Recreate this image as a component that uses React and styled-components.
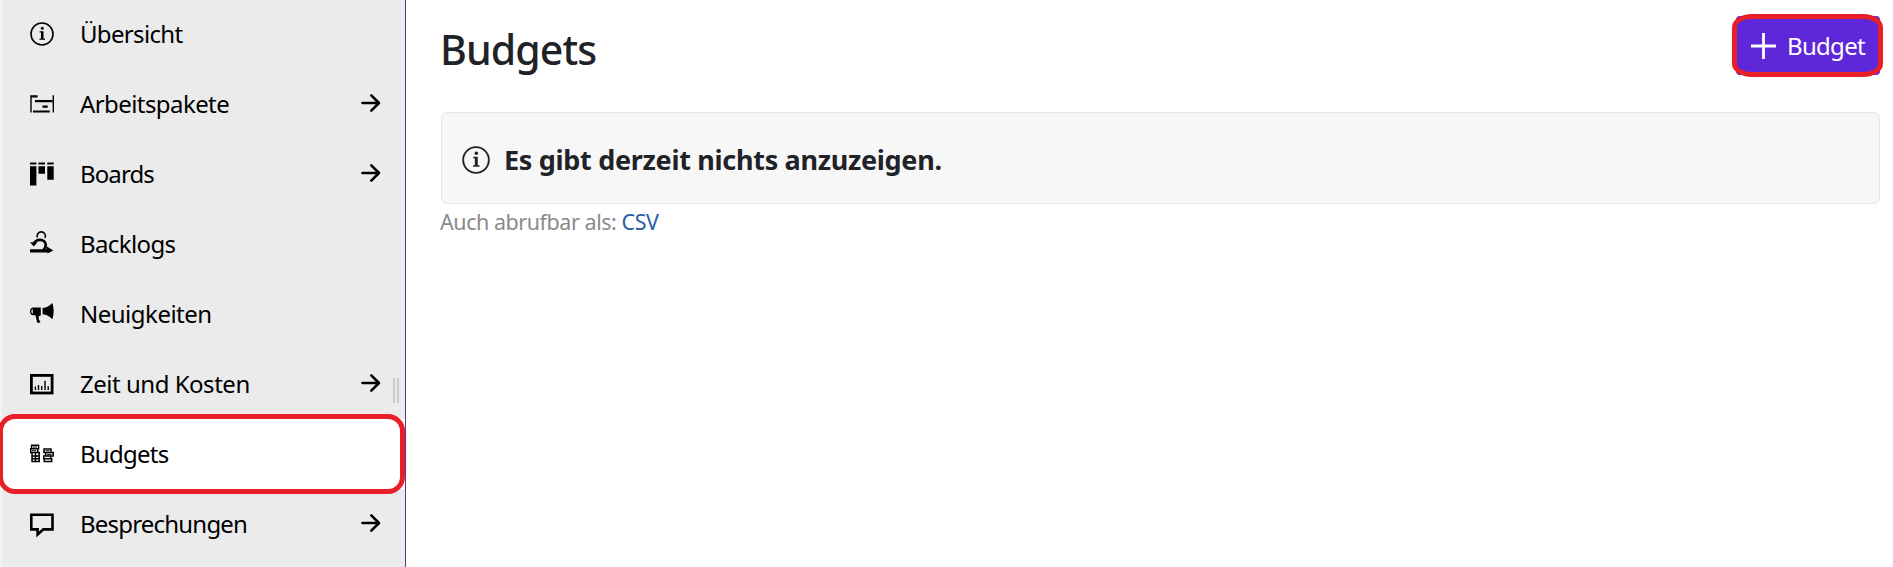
import React from 'react';
import styled, { createGlobalStyle } from 'styled-components';

const GlobalStyle = createGlobalStyle`
  * { box-sizing: border-box; }
  html, body { margin: 0; height: 100%; background: #fff; overflow: hidden; }
  body { font-family: "Noto Sans", "Open Sans", sans-serif; color: #1f2328; }
  #root { height: 100%; }
`;

const Page = styled.div`
  display: flex;
  width: 100%;
  height: 567px;
  overflow: hidden;
`;

const Sidebar = styled.nav`
  position: relative;
  flex: 0 0 406px;
  height: 567px;
  background: linear-gradient(90deg, #f3f3f3 2px, #ebebeb 2px);
  border-right: 1px solid #563d8a;
  overflow: hidden;
`;

const MenuList = styled.ul`
  list-style: none;
  margin: -1px 0 0;
  padding: 0;
`;

const MenuItem = styled.li`
  display: flex;
  align-items: center;
  height: 70px;
  padding: 0 24px 0 29.5px;
  background: ${(p) => (p.$active ? '#fff' : 'transparent')};
  color: #000;
`;

const MenuIcon = styled.svg`
  flex: none;
  width: 24px;
  height: 24px;
  margin-right: 26.5px;
  overflow: visible;
`;

const MenuLabel = styled.span`
  flex: 1;
  font-size: 24px;
  line-height: 34px;
  white-space: nowrap;
  letter-spacing: ${(p) => p.$track}px;
`;

const Arrow = styled.svg`
  flex: none;
  width: 20px;
  height: 20px;
  margin-top: -3px;
`;

const ResizeGrip = styled.div`
  position: absolute;
  top: 378px;
  right: 6px;
  width: 6px;
  height: 25px;
  border: solid #cbcbcb;
  border-width: 0 2px;
`;

const ActiveMarker = styled.div`
  position: absolute;
  top: 414px;
  left: -2px;
  width: 407px;
  height: 80px;
  border: 5px solid #e81f27;
  border-radius: 17px;
`;

const Content = styled.main`
  flex: 1;
  min-width: 0;
  padding: 16px 13px 0 35px;
`;

const Toolbar = styled.header`
  display: flex;
  justify-content: space-between;
  align-items: flex-start;
  height: 96px;
`;

const Title = styled.h1`
  margin: 4px 0 0 -1px;
  font-size: 41px;
  font-weight: 500;
  line-height: 58px;
  letter-spacing: ${(p) => p.$track}px;
`;

const CreateButton = styled.button`
  position: relative;
  display: flex;
  align-items: center;
  width: 144px;
  height: 59px;
  padding: 0 0 0 15px;
  border: 0;
  border-radius: 4px;
  background: #5f27da;
  color: #fff;
  font: 400 24px/34px "Noto Sans", sans-serif;
  letter-spacing: ${(p) => p.$track}px;

  svg {
    flex: none;
    width: 25px;
    height: 26px;
    margin-right: 11px;
  }
`;

const ButtonMarker = styled.span`
  position: absolute;
  top: -2px;
  left: -4px;
  width: 151px;
  height: 63px;
  border: 5px solid #e81f27;
  border-radius: 20px / 13px;
`;

const Notice = styled.section`
  display: flex;
  align-items: center;
  height: 92px;
  padding: 3px 0 0 20px;
  border: 1px solid #e6e6e6;
  border-radius: 6px;
  background: #f7f7f7;

  svg {
    flex: none;
    width: 28px;
    height: 28px;
    margin-right: 14px;
  }
`;

const NoticeText = styled.strong`
  font-size: 27px;
  font-weight: 700;
  line-height: 38px;
  white-space: nowrap;
  letter-spacing: ${(p) => p.$track}px;
`;

const Export = styled.p`
  margin: 2px 0 0 -1px;
  font-size: 21.5px;
  line-height: 32px;
  color: #8a8a8a;
  letter-spacing: ${(p) => p.$track}px;

  a { color: #2a5ba8; text-decoration: none; }
`;

const InfoShape = () => (
  <>
    <circle cx="12" cy="12" r="11" fill="none" stroke="currentColor" strokeWidth="1.6" />
    <circle cx="12.3" cy="6.3" r="1.5" fill="currentColor" />
    <path d="M9.6 9.2h3.9v7.2h1.5v1.4H9.5v-1.4H11v-5.8H9.6z" fill="currentColor" />
  </>
);

const shapes = {
  info: <InfoShape />,
  packages: (
    <path
      d="M.3 3.2h1.4v17.4H.3zM22.6 3.2h1.4v17.4h-1.4zM1.4 3.2h6.2v2.2H1.4zM5 8h17.4v2.2H5zM12.5 13.4h5.2v2.4h-5.2zM3 18.4h16.8v2.2H3z"
      fill="currentColor"
    />
  ),
  boards: (
    <path
      d="M0 .5h6.4v1.9H0zM8.5.5H15v1.9H8.5zM17.3.5h6.4v1.9h-6.4zM0 4.3h6.4v19.2H0zM8.5 4.3H15v7.4H8.5zM17.3 4.3h6.4v13.4h-6.4z"
      fill="currentColor"
    />
  ),
  backlogs: (
    <>
      <path d="M7.3 5.4A4.2 4.2 0 1 1 15 6" fill="none" stroke="currentColor" strokeWidth="1.6" />
      <path d="M3.7 12.5C4.6 6.5 15.5 6 15.8 13c.1 2.5-1.1 3.7-2.5 5.2" fill="none" stroke="currentColor" strokeWidth="2.7" />
      <path d="M0 10.2h7.5L3.8 14.6zM0 17.2h16.5v-2.9l6.8 4.3-5.8 3v-1.2H0z" fill="currentColor" />
    </>
  ),
  news: (
    <path
      fillRule="evenodd"
      d="M10.8 5.5v8l-2.1.8.1 3.2 1.8 2.6c-1 1-2.5 1-3.5.3L5.5 13.2H3.2C1.3 13.2 0 11.4 0 9.4s1.3-3.9 3.2-3.9zM2.8 7.2C.9 7.2.9 11.5 2.8 11.5zM12.6 6.1c4-.6 6.9-1.8 9.7-5.1 1.8 4.2 1.8 12.1 0 16.3-2.8-3.3-5.7-4.5-9.7-5z"
      fill="currentColor"
    />
  ),
  costs: (
    <>
      <rect x="1.4" y="3.4" width="20.7" height="17.6" fill="none" stroke="currentColor" strokeWidth="2.8" />
      <path d="M5.4 18v-3.6M8.5 18v-5M11.7 18v-4M15 18V8.8M18.2 18v-3.7" stroke="currentColor" strokeWidth="1.4" fill="none" />
    </>
  ),
  budgets: (
    <g fill="none" stroke="currentColor" strokeWidth="1.5">
      <path d="M1.6 3.2h7v3.6h-7zM.7 6.8h7v3.6h-7zM2 10.4h7.2v3.5H2zM2 13.9h7.2v5.5H2zM2 16.7h7.2M5.5 11v8" />
      <path d="M14 7h7v3.6h-7zM15.6 10.6h7.6v3.5h-7.6zM13.7 14.1h7v2.7h-7zM14.3 16.8h7.4v2.7h-7.4z" />
      <path d="M3 5h4M2 8.7h4M15.5 8.8h4M17 12.4h4.5" strokeWidth="1" />
    </g>
  ),
  meetings: (
    <path d="M1.3 2.7h21.2v14.7h-9.2l-5.7 5.1v-5.1H1.3z" fill="none" stroke="currentColor" strokeWidth="2.6" />
  ),
};

const items = [
  { icon: 'info', label: 'Übersicht', track: -0.67 },
  { icon: 'packages', label: 'Arbeitspakete', arrow: true, track: -0.58 },
  { icon: 'boards', label: 'Boards', arrow: true, track: -0.9 },
  { icon: 'backlogs', label: 'Backlogs', track: -0.62 },
  { icon: 'news', label: 'Neuigkeiten', track: -0.5 },
  { icon: 'costs', label: 'Zeit und Kosten', arrow: true, track: -0.48 },
  { icon: 'budgets', label: 'Budgets', active: true, track: -0.75 },
  { icon: 'meetings', label: 'Besprechungen', arrow: true, track: -0.8 },
];

export default function App() {
  return (
    <Page>
      <GlobalStyle />
      <Sidebar>
        <MenuList>
          {items.map((item) => (
            <MenuItem key={item.label} $active={item.active}>
              <MenuIcon viewBox="0 0 24 24">{shapes[item.icon]}</MenuIcon>
              <MenuLabel $track={item.track}>{item.label}</MenuLabel>
              {item.arrow && (
                <Arrow viewBox="0 0 20 20">
                  <path d="M1.5 10h16M10.3 2.3l7.7 7.7-7.7 7.7" fill="none" stroke="#000" strokeWidth="2.6" strokeLinecap="round" strokeLinejoin="round" />
                </Arrow>
              )}
            </MenuItem>
          ))}
        </MenuList>
        <ResizeGrip />
        <ActiveMarker />
      </Sidebar>
      <Content>
        <Toolbar>
          <Title $track={-0.9}>Budgets</Title>
          <CreateButton $track={-0.7}>
            <svg viewBox="0 0 25 26">
              <path d="M0 13h25M12.5 0v26" stroke="#fff" strokeWidth="2.8" />
            </svg>
            Budget
            <ButtonMarker />
          </CreateButton>
        </Toolbar>
        <Notice>
          <svg viewBox="0 0 24 24"><InfoShape /></svg>
          <NoticeText $track={-0.3}>Es gibt derzeit nichts anzuzeigen.</NoticeText>
        </Notice>
        <Export $track={-0.45}>
          Auch abrufbar als: <a>CSV</a>
        </Export>
      </Content>
    </Page>
  );
}
